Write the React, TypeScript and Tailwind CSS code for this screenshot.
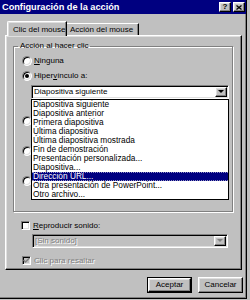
import React from "react";

const raised =
  "border border-t-white border-l-white border-r-black border-b-black shadow-[inset_-1px_-1px_#808080,inset_1px_1px_#dfdfdf]";
const sunken =
  "border border-t-[#808080] border-l-[#808080] border-r-white border-b-white shadow-[inset_1px_1px_#000,inset_-1px_-1px_#dfdfdf]";

const items = [
  "Diapositiva siguiente",
  "Diapositiva anterior",
  "Primera diapositiva",
  "Última diapositiva",
  "Última diapositiva mostrada",
  "Fin de demostración",
  "Presentación personalizada...",
  "Diapositiva...",
  "Dirección URL...",
  "Otra presentación de PowerPoint...",
  "Otro archivo...",
];

const Radio = ({ checked = false }: { checked?: boolean }) => (
  <span
    className={`w-[10px] h-[10px] shrink-0 rounded-full bg-white flex items-center justify-center ${sunken}`}
  >
    {checked && <span className="w-[4px] h-[4px] rounded-full bg-black" />}
  </span>
);

const Check = ({ checked = false, disabled = false }: { checked?: boolean; disabled?: boolean }) => (
  <span
    className={`w-[9px] h-[9px] shrink-0 flex items-center justify-center ${sunken} ${
      disabled ? "bg-[#c0c0c0]" : "bg-white"
    }`}
  >
    {checked && (
      <svg width="7" height="7" viewBox="0 0 7 7">
        <path d="M0.5 3 L2.5 5 L6.5 1" stroke={disabled ? "#808080" : "#000"} strokeWidth="1.4" fill="none" />
      </svg>
    )}
  </span>
);

const Arrow = ({ color = "#000" }: { color?: string }) => (
  <svg width="6" height="4" viewBox="0 0 6 4">
    <path d="M0 0 H6 L3 3 Z" fill={color} />
  </svg>
);

const App = () => {
  return (
    <div className="w-[250px] h-[300px] bg-[#c0c0c0] overflow-hidden font-['Liberation_Sans',Arial,sans-serif] text-[8px] leading-[10px] text-black">
      <div className="w-[247px] h-[299px] flex flex-col border-r border-b border-black shadow-[inset_-1px_-1px_#808080]">
        {/* barra de título */}
        <div className="h-[14px] bg-[#000080] flex items-center justify-between pl-[2px] pr-[1px]">
          <span className="text-white font-bold text-[9.2px] leading-[12px]">
            Configuración de la acción
          </span>
          <div className="flex gap-[2px]">
            <span className={`w-[12px] h-[10px] bg-[#c0c0c0] flex items-center justify-center text-[8px] font-bold leading-[8px] ${raised}`}>
              ?
            </span>
            <span className={`w-[12px] h-[10px] bg-[#c0c0c0] flex items-center justify-center ${raised}`}>
              <svg width="6" height="5" viewBox="0 0 6 5">
                <path d="M0.5 0.5 L5.5 4.5 M5.5 0.5 L0.5 4.5" stroke="#000" strokeWidth="1.3" />
              </svg>
            </span>
          </div>
        </div>

        {/* pestañas */}
        <div className="mt-[7px] ml-[7px] h-[14px] flex items-end">
          <div className="relative z-10 -mb-px w-[60px] h-[15px] bg-[#c0c0c0] border-t border-l border-r border-t-white border-l-white border-r-black rounded-tl-[2px] shadow-[inset_-1px_0_#808080,inset_1px_1px_#dfdfdf] pl-[5px] pt-[3px]">
            Clic del mouse
          </div>
          <div className="w-[72px] h-[12px] border-t border-r border-t-white border-r-black shadow-[inset_-1px_0_#808080] pl-[3px] pt-[1px]">
            Acción del mouse
          </div>
        </div>

        {/* panel */}
        <div className={`ml-[5px] w-[237px] h-[235px] bg-[#c0c0c0] ${raised}`}>
          <fieldset className="ml-[7px] mt-[5px] w-[220px] border border-[#808080] shadow-[1px_1px_#fff,inset_1px_1px_#fff] pl-[8px] pt-[5px] pb-[25px]">
            <legend className="-ml-[4px] px-[2px] leading-[10px]">Acción al hacer clic</legend>
            <div className="flex items-center gap-[2px] h-[10px]">
              <Radio />
              <span>
                <u>N</u>inguna
              </span>
            </div>
            <div className="mt-[5px] flex items-center gap-[2px] h-[10px]">
              <Radio checked />
              <span>
                Hiper<u>v</u>ínculo a:
              </span>
            </div>
            <div className={`relative mt-[4px] ml-[9px] w-[198px] h-[14px] bg-white flex items-center pl-[2px] pr-[1px] ${sunken}`}>
              <span className="flex-1">Diapositiva siguiente</span>
              <span className={`w-[12px] h-[10px] bg-[#c0c0c0] flex items-center justify-center ${raised}`}>
                <Arrow />
              </span>
              {/* lista desplegada */}
              <div className="absolute z-20 -left-px top-[13px] w-[198px] bg-white border border-black text-[8.3px]">
                {items.map((it) => {
                  const sel = it === "Dirección URL...";
                  return (
                    <div
                      key={it}
                      className={`relative h-[9px] leading-[9px] pl-[1px] whitespace-nowrap ${
                        sel ? "bg-[#000080] text-white" : ""
                      }`}
                    >
                      {it}
                      {sel && (
                        <span className="absolute inset-0 border-y border-dotted border-[#9090c0] pointer-events-none" />
                      )}
                    </div>
                  );
                })}
              </div>
            </div>
            {/* opciones tapadas por la lista */}
            <div className="mt-[17px] h-[10px] flex items-center">
              <Radio />
            </div>
            <div className="mt-[20px] h-[10px] flex items-center">
              <Radio />
            </div>
            <div className="mt-[20px] h-[10px] flex items-center">
              <Radio />
            </div>
          </fieldset>

          <div className="mt-[9px] ml-[15px] flex items-center gap-[3px] h-[9px]">
            <Check />
            <span>
              <u>R</u>eproducir sonido:
            </span>
          </div>
          <div className={`mt-[4px] ml-[26px] w-[196px] h-[14px] bg-[#c0c0c0] flex items-center pl-[2px] pr-[1px] ${sunken}`}>
            <span className="flex-1 text-[#808080] [text-shadow:1px_1px_0_#fff]">[Sin sonido]</span>
            <span className={`w-[12px] h-[10px] bg-[#c0c0c0] flex items-center justify-center ${raised}`}>
              <Arrow color="#808080" />
            </span>
          </div>
          <div className="mt-[8px] ml-[16px] flex items-center gap-[3px] h-[9px]">
            <Check checked disabled />
            <span className="text-[#808080] [text-shadow:1px_1px_0_#fff]">Clic para resaltar</span>
          </div>
        </div>

        {/* botones */}
        <div className="mt-[7px] w-[243px] flex justify-end gap-[6px]">
          <div className="w-[45px] h-[16px] border border-black">
            <div className={`w-full h-full bg-[#c0c0c0] flex items-center justify-center ${raised}`}>
              Aceptar
            </div>
          </div>
          <div className={`w-[45px] h-[16px] bg-[#c0c0c0] flex items-center justify-center ${raised}`}>
            Cancelar
          </div>
        </div>
      </div>
    </div>
  );
};

export default App;
